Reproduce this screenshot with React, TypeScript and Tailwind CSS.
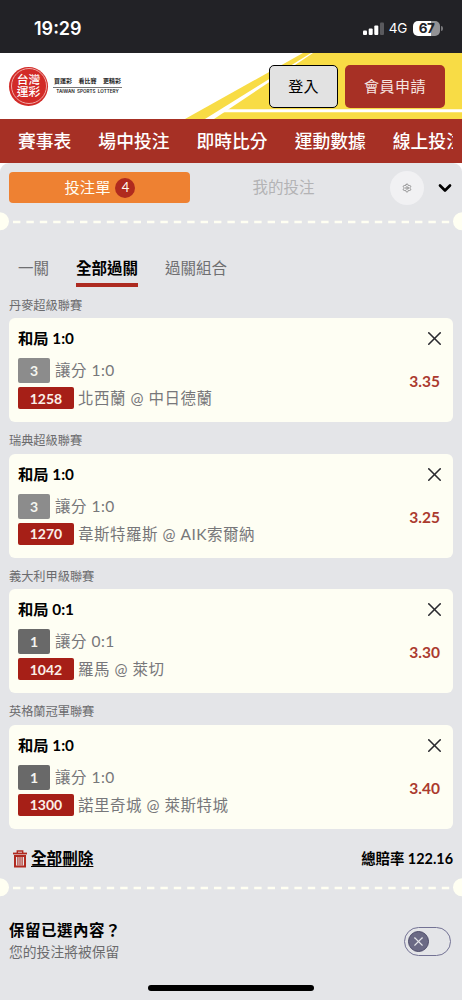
import { useState } from "react";
import clsx from "clsx";
import { ChevronDown, Settings, X } from "lucide-react";

type Bet = {
  league: string;
  pick: string;
  legs: number;
  handicap: string;
  code: string;
  teams: string;
  odds: string;
};

const NAV_ITEMS = ["賽事表", "場中投注", "即時比分", "運動數據", "線上投注"];

const MODES = ["一關", "全部過關", "過關組合"];

const BETS: Bet[] = [
  { league: "丹麥超級聯賽", pick: "和局 1:0", legs: 3, handicap: "讓分 1:0", code: "1258", teams: "北西蘭 @ 中日德蘭", odds: "3.35" },
  { league: "瑞典超級聯賽", pick: "和局 1:0", legs: 3, handicap: "讓分 1:0", code: "1270", teams: "韋斯特羅斯 @ AIK索爾納", odds: "3.25" },
  { league: "義大利甲級聯賽", pick: "和局 0:1", legs: 1, handicap: "讓分 0:1", code: "1042", teams: "羅馬 @ 萊切", odds: "3.30" },
  { league: "英格蘭冠軍聯賽", pick: "和局 1:0", legs: 1, handicap: "讓分 1:0", code: "1300", teams: "諾里奇城 @ 萊斯特城", odds: "3.40" },
];

export default function App() {
  return (
    <div className="flex h-[1000px] w-[462px] flex-col overflow-hidden bg-white font-[Lato,'Noto_Sans_CJK_TC',sans-serif] text-black">
      <StatusBar />
      <Header />
      <NavBar />
      <BetSlip />
    </div>
  );
}

function StatusBar() {
  return (
    <div className="flex h-[53px] shrink-0 items-center justify-between bg-[#222226] pt-[3px] pr-[19px] pl-[34px] font-[Inter,sans-serif] text-white">
      <span className="text-[18px] font-semibold">19:29</span>
      <div className="flex items-center">
        <svg width="21" height="13" viewBox="0 0 21 13" fill="white">
          <rect x="0" y="8.5" width="4" height="4.5" rx="1" />
          <rect x="5.7" y="6.5" width="4" height="6.5" rx="1" />
          <rect x="11.3" y="3.5" width="4" height="9.5" rx="1" />
          <rect x="17" y="0.5" width="4" height="12.5" rx="1" fill="#5a5a5e" />
        </svg>
        <span className="ml-[5px] text-[13.5px] tracking-[-0.3px]">4G</span>
        <div className="ml-[6px] flex h-[15px] w-[27px] items-center justify-center rounded-[5px] bg-[linear-gradient(to_right,white_67%,#929295_67%)] text-[13.5px] leading-[15px] font-bold tracking-[-0.5px] text-[#222226]">
          67
        </div>
        <div className="ml-px h-[5px] w-[2px] rounded-r-full bg-[#77777a]" />
      </div>
    </div>
  );
}

function Header() {
  return (
    <header className="relative flex h-[66px] shrink-0 items-center justify-between pr-[17px] pl-[9px]">
      <svg className="absolute inset-0" width="462" height="66" viewBox="0 0 462 66">
        <path d="M303 0H462V66H185Z" fill="#f8dc45" />
        <path d="M311 0H313L214 66H205Z" fill="white" />
        <path d="M226 56.3H462V59.3H220Z" fill="white" />
      </svg>
      <div className="relative flex items-center gap-[5px]">
        <div className="flex size-[39px] items-center justify-center rounded-full bg-[#d22a27] p-[1.5px]">
          <div className="flex size-full flex-col items-center justify-center rounded-full border border-[#f0a9a5] text-[11.8px] leading-[12px] font-medium text-white">
            <span>台灣</span>
            <span>運彩</span>
          </div>
        </div>
        <div className="flex w-[69px] flex-col items-center">
          <div className="flex w-full justify-between border-b border-[#777] px-px pb-[2px] text-[6px] leading-[8px] font-bold text-[#222]">
            <span>買運彩</span>
            <span>看比賽</span>
            <span>更精彩</span>
          </div>
          <span className="pt-px font-[Inter,sans-serif] text-[4.6px] leading-[6px] font-semibold whitespace-nowrap text-[#222]">
            TAIWAN&nbsp; SPORTS&nbsp; LOTTERY
          </span>
        </div>
      </div>
      <div className="relative flex gap-[7px]">
        <button className="h-[43px] w-[69px] rounded-[5px] border border-black bg-[#e2e2e2] text-[15px] tracking-[0.3px]">登入</button>
        <button className="h-[43px] w-[100px] rounded-[5px] bg-[#a73025] text-[15px] tracking-[0.5px] text-[#f6e6e2]">會員申請</button>
      </div>
    </header>
  );
}

function NavBar() {
  return (
    <nav className="flex h-11 shrink-0 items-center bg-[#a63025] pt-px pr-[9px] pl-[18px] text-[17.8px] font-medium text-white">
      <div className="flex gap-[27px] overflow-hidden whitespace-nowrap">
        {NAV_ITEMS.map((item) => (
          <span key={item} className="shrink-0">
            {item}
          </span>
        ))}
      </div>
    </nav>
  );
}

function BetSlip() {
  const [mode, setMode] = useState("全部過關");

  return (
    <main className="flex flex-1 flex-col rounded-t-[9px] bg-[#e4e5e8]">
      <div className="flex h-[49px] items-center pr-[7px] pl-[9px]">
        <button className="flex h-[31px] w-[181px] shrink-0 items-center justify-center gap-[5px] rounded-[4px] bg-[#ee8132] pl-px text-[15.3px] text-[#fffdf2]">
          投注單
          <span className="flex size-5 items-center justify-center rounded-full bg-[#b02a1e] text-[13px]">4</span>
        </button>
        <button className="w-[187px] shrink-0 text-center text-[15.5px] text-[#b3b3b5]">我的投注</button>
        <button className="ml-[13px] flex size-[34px] shrink-0 items-center justify-center rounded-full bg-[#f1f1f3]">
          <Settings className="size-[10px] text-[#777]" strokeWidth={1.8} />
        </button>
        <ChevronDown className="ml-[11px] size-[20px] shrink-0" strokeWidth={3.2} />
      </div>

      <Perforation />

      {/* Parlay modes */}
      <div className="mt-[24px] flex h-[32px] gap-[27px] pl-[18px]">
        {MODES.map((item) => (
          <button
            key={item}
            onClick={() => setMode(item)}
            className={clsx(
              "h-[31px] border-b-4 pb-[2px] text-[15.5px] leading-[25px]",
              item === mode ? "border-[#ad2a20] font-bold text-black" : "border-transparent text-[#6f6f71]"
            )}
          >
            {item}
          </button>
        ))}
      </div>

      <div className="mt-[8px] px-[9px]">
        {BETS.map((bet) => (
          <BetCard key={bet.code} bet={bet} />
        ))}
      </div>

      {/* Totals */}
      <div className="flex h-[40px] items-center justify-between px-[9px] pt-[2px]">
        <button className="flex items-center gap-[4px] pl-[4px]">
          <TrashIcon />
          <span className="text-[15.6px] font-bold underline decoration-1 underline-offset-2">全部刪除</span>
        </button>
        <span className="text-[14.4px] font-bold">總賠率 122.16</span>
      </div>

      <Perforation />

      <KeepSelection />

      <div className="mx-auto mt-[22px] h-[6px] w-[166px] shrink-0 rounded-full bg-black" />
    </main>
  );
}

// Ticket tear line with a notch at either edge
function Perforation() {
  return (
    <svg className="block shrink-0" width="462" height="20" viewBox="0 0 462 20">
      <circle cx="0" cy="9.3" r="9" fill="#fffff2" />
      <circle cx="462" cy="9.3" r="9" fill="#fffff2" />
      <path d="M13 10H450" stroke="#fffff2" strokeWidth="2.4" strokeDasharray="7.4 6" />
    </svg>
  );
}

function BetCard({ bet }: { bet: Bet }) {
  return (
    <section className="h-[135.4px]">
      <h3 className="h-[22.4px] text-[12.2px] leading-[19px] text-[#6b6b6d]">{bet.league}</h3>
      <div className="flex h-[104px] justify-between rounded-[6px] bg-[#fefef3] pt-[9px] pr-[7px] pl-[9px]">
        <div>
          <div className="text-[15.3px] leading-[22px] font-bold">{bet.pick}</div>
          <div className="mt-[9px] flex items-center gap-[5px]">
            <span
              className={clsx(
                "flex h-[25px] w-[32px] items-center justify-center rounded-[2px] text-[14px] font-bold text-[#f5f5f0]",
                bet.legs === 1 ? "bg-[#696969]" : "bg-[#8c8c8c]"
              )}
            >
              {bet.legs}
            </span>
            <span className="text-[15.5px] leading-[25px] tracking-[0.5px] text-[#77777a]">{bet.handicap}</span>
          </div>
          <div className="mt-[4px] flex items-center gap-[4px]">
            <span className="flex h-[22px] w-[56px] items-center justify-center rounded-[2px] bg-[#a61f17] text-[14px] font-bold text-[#fbefe8]">
              {bet.code}
            </span>
            <span className="text-[15.5px] leading-[22px] tracking-[0.5px] text-[#77777a]">{bet.teams}</span>
          </div>
        </div>
        <div className="flex flex-col items-end">
          <X className="size-[23px] text-[#2a2a30]" strokeWidth={1.6} />
          <span className="mt-[21px] mr-[6px] text-[15.5px] leading-[20px] font-bold text-[#ab3a2e]">{bet.odds}</span>
        </div>
      </div>
    </section>
  );
}

function KeepSelection() {
  const [keep, setKeep] = useState(false);

  return (
    <div className="mt-[19px] flex h-[46px] items-center justify-between pr-[11px] pl-[9px]">
      <div>
        <div className="text-[15.5px] leading-[23px] font-bold tracking-[0.5px]">保留已選內容？</div>
        <div className="text-[13.8px] leading-[19px] text-[#6b6b6d]">您的投注將被保留</div>
      </div>
      <button
        onClick={() => setKeep(!keep)}
        className={clsx(
          "mt-[3px] flex h-[29px] w-[47px] items-center rounded-full border border-[#737294] px-[3px]",
          keep && "justify-end"
        )}
      >
        <span className="flex size-[21px] items-center justify-center rounded-full border border-[#4c4a68] bg-[#6b6a85]">
          <X className="size-[15px] text-[#e4e5e8]" strokeWidth={1.8} />
        </span>
      </button>
    </div>
  );
}

function TrashIcon() {
  return (
    <svg width="14" height="18" viewBox="0 0 14 18" fill="none" stroke="#b02a20">
      <path d="M4.3 3V1H9.7V3" strokeWidth="1.4" />
      <path d="M0 3.5H14" strokeWidth="1.8" />
      <path d="M2 6V16.5H12V6Z" strokeWidth="2" />
      <path d="M4.9 7V15.5M7 7V15.5M9.1 7V15.5" strokeWidth="1.1" />
    </svg>
  );
}
